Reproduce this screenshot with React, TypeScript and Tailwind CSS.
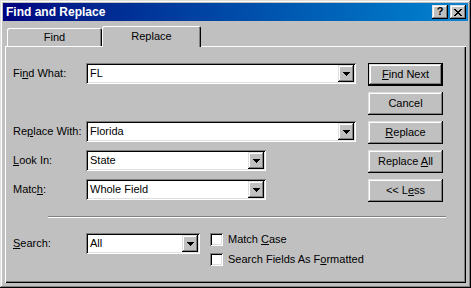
import React from "react";

const raised =
  "shadow-[inset_-1px_-1px_#000,inset_1px_1px_#dfdfdf,inset_-2px_-2px_#808080,inset_2px_2px_#fff]";
const sunken =
  "shadow-[inset_1px_1px_#808080,inset_-1px_-1px_#fff,inset_2px_2px_#000,inset_-2px_-2px_#dfdfdf]";

function Arrow() {
  return (
    <svg width="7" height="4" viewBox="0 0 7 4" shapeRendering="crispEdges">
      <path d="M0 0h7v1h-1v1h-1v1h-1v1h-1v-1h-1v-1h-1v-1h-1z" fill="#000" />
    </svg>
  );
}

function Combo({ value, w }: { value: string; w: string }) {
  return (
    <div className={`${w} h-[21px] bg-white ${sunken} p-[2px] flex items-stretch`}>
      <div className="flex-1 pl-[2px] flex items-center text-[11px] leading-none">{value}</div>
      <div className={`w-[16px] bg-[#c0c0c0] ${raised} flex items-center justify-center`}>
        <Arrow />
      </div>
    </div>
  );
}

function Btn({ children, def }: { children: React.ReactNode; def?: boolean }) {
  if (def) {
    return (
      <div className="w-[75px] h-[23px] border border-black">
        <div className={`w-full h-full ${raised} flex items-center justify-center text-[11px] leading-none`}>
          <span>{children}</span>
        </div>
      </div>
    );
  }
  return (
    <div className={`w-[75px] h-[23px] ${raised} flex items-center justify-center text-[11px] leading-none`}>
      <span>{children}</span>
    </div>
  );
}

function Check({ children }: { children: React.ReactNode }) {
  return (
    <div className="flex items-center h-[13px]">
      <div className={`w-[13px] h-[13px] bg-white ${sunken}`} />
      <div className="ml-[5px] text-[11px] leading-none">{children}</div>
    </div>
  );
}

export default function App() {
  return (
    <div className="w-[471px] h-[288px] bg-[#c0c0c0] text-black font-[family-name:'Liberation_Sans',Arial,sans-serif] shadow-[inset_-1px_-1px_#000,inset_1px_1px_#dfdfdf,inset_-2px_-2px_#808080,inset_2px_2px_#fff] p-[3px] flex flex-col select-none">
      {/* Title bar */}
      <div className="h-[18px] bg-gradient-to-r from-[#000080] to-[#1084d0] flex items-center justify-between pl-[3px] pr-[2px]">
        <div className="text-white font-bold text-[12px] leading-none">Find and Replace</div>
        <div className="flex gap-[2px]">
          <div className={`w-[16px] h-[14px] bg-[#c0c0c0] ${raised} flex items-center justify-center font-bold text-[11px] leading-none pb-px`}>
            ?
          </div>
          <div className={`w-[16px] h-[14px] bg-[#c0c0c0] ${raised} flex items-center justify-center`}>
            <svg width="8" height="7" viewBox="0 0 8 7" shapeRendering="crispEdges">
              <path
                d="M0 0h2v1h-2zM6 0h2v1h-2zM1 1h2v1h-2zM5 1h2v1h-2zM2 2h4v1h-4zM3 3h2v1h-2zM2 4h4v1h-4zM1 5h2v1h-2zM5 5h2v1h-2zM0 6h2v1h-2zM6 6h2v1h-2z"
                fill="#000"
              />
            </svg>
          </div>
        </div>
      </div>

      <div className="flex-1 mx-[2px] mb-[2px] flex flex-col">
        {/* Tabs */}
        <div className="mt-[5px] h-[20px] flex items-end pl-[2px]">
          <div className="w-[95px] h-[18px] rounded-t-[2px] shadow-[inset_1px_1px_#fff,inset_-1px_0_#000,inset_-2px_0_#808080] flex items-center justify-center text-[11px] leading-none pt-px">
            Find
          </div>
          <div className="relative z-10 -mb-px w-[99px] h-[21px] bg-[#c0c0c0] rounded-t-[2px] shadow-[inset_1px_1px_#fff,inset_-1px_0_#000,inset_-2px_0_#808080] flex items-center justify-center text-[11px] leading-none pb-[1px]">
            Replace
          </div>
        </div>

        {/* Panel */}
        <div className="flex-1 shadow-[inset_1px_1px_#fff,inset_-1px_-1px_#000,inset_-2px_-2px_#808080] pt-[17px] pl-[8px] flex flex-col text-[11px] leading-none">
          <div className="flex">
            <div className="w-[355px] flex flex-col">
              <div className="flex items-center">
                <div className="w-[73px]">
                  Fi<u>n</u>d What:
                </div>
                <Combo value="FL" w="w-[270px]" />
              </div>
              <div className="flex items-center mt-[37px]">
                <div className="w-[73px]">
                  Re<u>p</u>lace With:
                </div>
                <Combo value="Florida" w="w-[270px]" />
              </div>
              <div className="flex items-center mt-[8px]">
                <div className="w-[73px]">
                  <u>L</u>ook In:
                </div>
                <Combo value="State" w="w-[180px]" />
              </div>
              <div className="flex items-center mt-[8px]">
                <div className="w-[73px]">
                  Matc<u>h</u>:
                </div>
                <Combo value="Whole Field" w="w-[180px]" />
              </div>
            </div>
            <div className="flex flex-col gap-[6px]">
              <Btn def>
                <u>F</u>ind Next
              </Btn>
              <Btn>Cancel</Btn>
              <Btn>
                <u>R</u>eplace
              </Btn>
              <Btn>
                Replace <u>A</u>ll
              </Btn>
              <Btn>
                &lt;&lt; L<u>e</u>ss
              </Btn>
            </div>
          </div>

          <div className="mt-[14px] ml-[35px] w-[398px] h-[2px] border-t border-t-[#808080] border-b border-b-white" />

          <div className="mt-[15px] flex items-start">
            <div className="w-[73px] h-[21px] flex items-center">
              <span>
                <u>S</u>earch:
              </span>
            </div>
            <Combo value="All" w="w-[114px]" />
            <div className="ml-[10px] flex flex-col gap-[7px]">
              <Check>
                Match <u>C</u>ase
              </Check>
              <Check>
                Search Fields As F<u>o</u>rmatted
              </Check>
            </div>
          </div>
        </div>
      </div>
    </div>
  );
}
